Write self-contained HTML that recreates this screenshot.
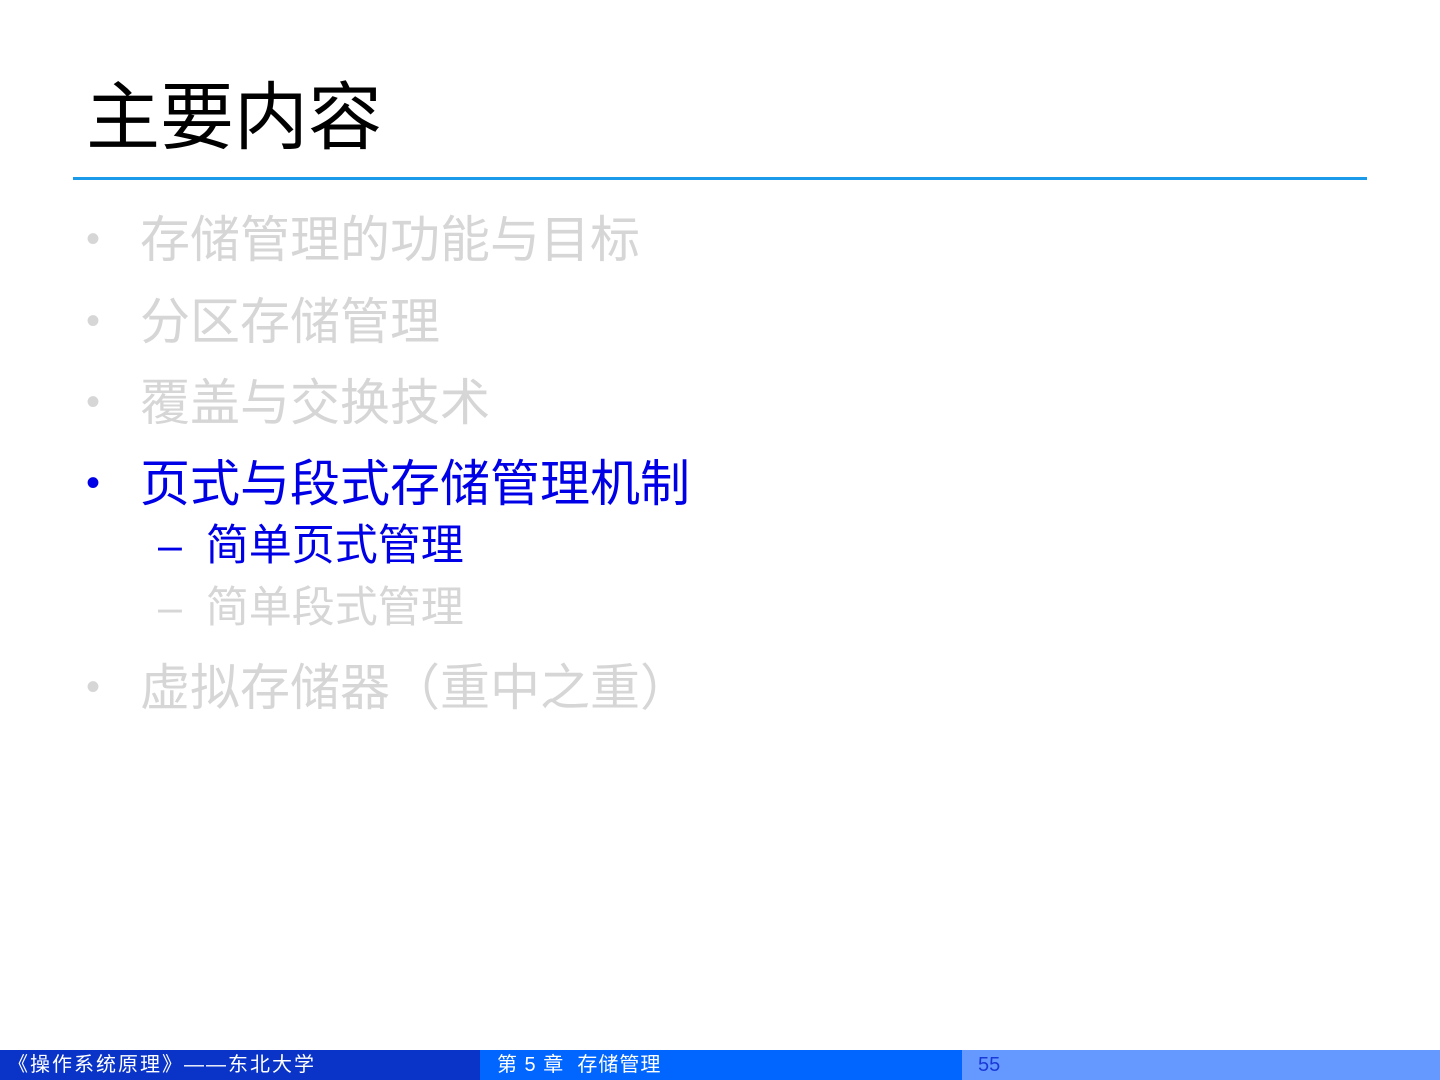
<!DOCTYPE html>
<html><head><meta charset="utf-8"><style>
body{margin:0;width:1440px;height:1080px;position:relative;background:#fff;font-family:"Liberation Sans","Noto Sans CJK SC",sans-serif;overflow:hidden}
.t{position:absolute;white-space:nowrap;line-height:1}
.g{color:#d6d6d6}.b{color:#0000e6}
.bul{position:absolute;font-size:40px;line-height:1}
</style></head><body>
<div class="t" style="left:86px;top:81px;font-size:74px;color:#000">主要内容</div>
<div style="position:absolute;left:73px;top:177px;width:1294px;height:3px;background:#1a9ae8"></div>

<div class="bul g" style="left:86px;top:219px">•</div>
<div class="t g" style="left:140px;top:215px;font-size:50px">存储管理的功能与目标</div>
<div class="bul g" style="left:86px;top:301px">•</div>
<div class="t g" style="left:140px;top:297px;font-size:50px">分区存储管理</div>
<div class="bul g" style="left:86px;top:382px">•</div>
<div class="t g" style="left:140px;top:378px;font-size:50px">覆盖与交换技术</div>
<div class="bul b" style="left:86px;top:463px">•</div>
<div class="t b" style="left:140px;top:459px;font-size:50px">页式与段式存储管理机制</div>
<div class="t b" style="left:158px;top:525px;font-size:43px">–&nbsp;&nbsp;简单页式管理</div>
<div class="t g" style="left:158px;top:587px;font-size:43px">–&nbsp;&nbsp;简单段式管理</div>
<div class="bul g" style="left:86px;top:667px">•</div>
<div class="t g" style="left:140px;top:663px;font-size:50px">虚拟存储器（重中之重）</div>

<div style="position:absolute;left:0;top:1050px;width:480px;height:30px;background:#0a34c8"></div>
<div style="position:absolute;left:480px;top:1050px;width:482px;height:30px;background:#0066ff"></div>
<div style="position:absolute;left:962px;top:1050px;width:478px;height:30px;background:#6699ff"></div>
<div class="t" style="left:8px;top:1055px;font-size:20px;letter-spacing:2px;color:#fff">《操作系统原理》——东北大学</div>
<div class="t" style="left:497px;top:1055px;font-size:20px;letter-spacing:1px;color:#fff">第 5 章&nbsp; 存储管理</div>
<div class="t" style="left:978px;top:1055px;font-size:20px;color:#1a3ad8">55</div>
</body></html>
